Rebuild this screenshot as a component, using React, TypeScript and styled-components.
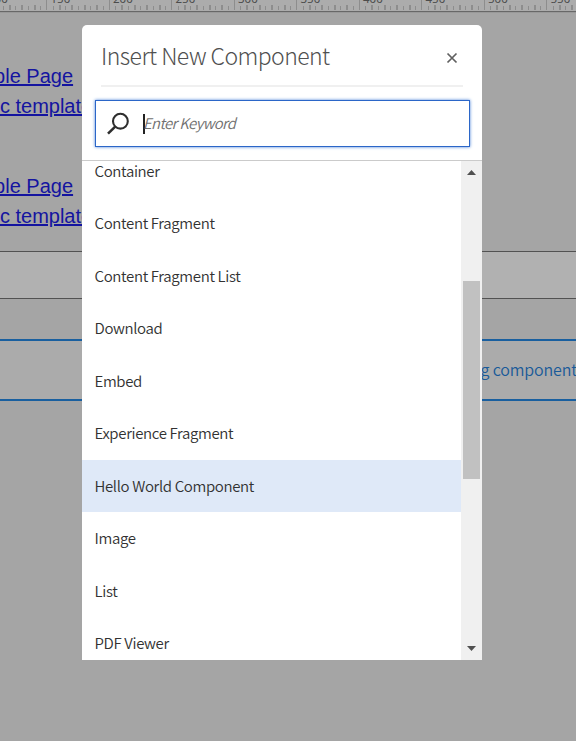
import React from 'react';
import styled, { createGlobalStyle } from 'styled-components';

const ui = '"Noto Sans CJK SC", "Noto Sans", sans-serif';

const Global = createGlobalStyle`
  * { box-sizing: border-box; }
  body { margin: 0; background: #a5a5a5; overflow: hidden; }
`;

const Screen = styled.div`
  position: relative;
  width: 576px;
  height: 741px;
  overflow: hidden;
  background: #a5a5a5;
  font-family: ${ui};
`;

const Ruler = styled.svg`
  display: block;
  width: 576px;
  height: 13px;
`;

const LinkGroup = styled.div<{ $gap: number }>`
  display: flex;
  flex-direction: column;
  padding-top: ${p => p.$gap}px;
`;

const PageLink = styled.a<{ $shift: number }>`
  display: block;
  width: max-content;
  height: 30px;
  line-height: 30px;
  margin-left: ${p => p.$shift}px;
  font-family: "Liberation Sans", Arial, sans-serif;
  font-size: 20px;
  color: #1414a0;
  text-decoration: underline;
  white-space: nowrap;
`;

const Field = styled.div`
  height: 48px;
  margin-top: 20px;
  border: solid #525252;
  border-width: 1px 0;
  background: #b1b1b1;
`;

const DropZone = styled.div`
  height: 62px;
  margin-top: 40px;
  padding-left: 471px;
  border: solid #195f9f;
  border-width: 2px 0;
  background: #ababab;
  color: #195a99;
  font-size: 16px;
  font-weight: 350;
  line-height: 56px;
  letter-spacing: -0.15px;
  white-space: nowrap;
  overflow: hidden;
`;

const Dialog = styled.section`
  position: absolute;
  left: 82px;
  top: 25px;
  width: 400px;
  height: 635px;
  display: flex;
  flex-direction: column;
  background: #fff;
  border-radius: 5px 5px 0 0;
  overflow: hidden;
`;

const Header = styled.header`
  display: flex;
  align-items: center;
  justify-content: space-between;
  height: 62px;
  margin: 0 19px;
  padding-right: 5px;
  border-bottom: 2px solid #f0f0f0;
`;

const Title = styled.h1`
  margin: 0;
  font-size: 23px;
  font-weight: 300;
  line-height: 60px;
  letter-spacing: -0.56px;
  color: #505050;
  white-space: nowrap;
`;

const CloseButton = styled.button`
  display: flex;
  padding: 5px 0 0;
  border: 0;
  background: none;
`;

const SearchBox = styled.label`
  display: flex;
  align-items: center;
  flex: none;
  height: 47px;
  margin: 13px 12px 13px 13px;
  padding-left: 11px;
  border: 1px solid #2b66c8;
  box-shadow: 0 0 3px #4a80d8;
`;

const Caret = styled.span`
  width: 2px;
  height: 20px;
  margin-left: 13px;
  background: #222;
`;

const Placeholder = styled.span`
  margin: -3px 0 0 -2px;
  font-size: 14.8px;
  font-style: italic;
  font-weight: 350;
  letter-spacing: -0.6px;
  color: #707070;
  white-space: nowrap;
`;

const ListArea = styled.div`
  display: flex;
  flex: 1;
  min-height: 0;
  border-top: 1px solid #cbcbcb;
`;

const Items = styled.ul`
  flex: 1;
  margin: -16px 0 0;
  padding: 0;
  list-style: none;
`;

const Viewport = styled.div`
  flex: 1;
  display: flex;
  overflow: hidden;
`;

const Item = styled.li<{ $selected?: boolean }>`
  height: 52.45px;
  padding-left: 12.5px;
  font-size: 15px;
  font-weight: 350;
  line-height: 51px;
  letter-spacing: -0.35px;
  color: #323232;
  background: ${p => (p.$selected ? '#dfe9f8' : 'transparent')};
  white-space: nowrap;
`;

const ScrollTrack = styled.div`
  display: flex;
  flex-direction: column;
  align-items: center;
  justify-content: space-between;
  width: 21px;
  padding: 9px 0;
  background: #f0f0f0;
`;

const Thumb = styled.div`
  width: 17px;
  height: 198px;
  margin-bottom: 61px;
  background: #c1c1c1;
`;

const Arrow = styled.svg`
  display: block;
  width: 9px;
  height: 5px;
`;

const items = [
  { label: 'Container' },
  { label: 'Content Fragment' },
  { label: 'Content Fragment List' },
  { label: 'Download' },
  { label: 'Embed' },
  { label: 'Experience Fragment' },
  { label: 'Hello World Component', selected: true },
  { label: 'Image' },
  { label: 'List' },
  { label: 'PDF Viewer' },
];

const majors = [100, 150, 200, 250, 300, 350, 400, 450, 500, 550];
const ticks = Array.from({ length: 102 }, (_, i) => i);

export default function App() {
  return (
    <Screen>
      <Global />
      <Ruler viewBox="0 0 576 13">
        <rect width="576" height="11" fill="#acacac" />
        {ticks.map(i => {
          const x = Math.round(-16.2 + i * 6.25);
          const major = i % 10 === 0;
          const wide = i % 2 === 0 && !major;
          return <rect key={i} x={x} y={major ? 0 : wide ? 5 : 6} width={wide ? 2 : 1} height={major ? 10 : wide ? 5 : 4} fill="#8d8d8d" />;
        })}
        {majors.map((n, i) => (
          <text key={n} x={-12 + i * 62.5} y="3" fontSize="11.5" fontFamily="Noto Sans" fill="#4c4c4c">{n}</text>
        ))}
        <rect y="11" width="576" height="1" fill="#686868" />
        <rect y="12" width="576" height="1" fill="#999" />
      </Ruler>
      <LinkGroup $gap={48}>
        <PageLink $shift={-47}>Sample Page</PageLink>
        <PageLink $shift={-39}>Basic template</PageLink>
      </LinkGroup>
      <LinkGroup $gap={50}>
        <PageLink $shift={-47}>Sample Page</PageLink>
        <PageLink $shift={-39}>Basic template</PageLink>
      </LinkGroup>
      <Field />
      <DropZone>ng components</DropZone>

      <Dialog>
        <Header>
          <Title>Insert New Component</Title>
          <CloseButton aria-label="Close">
            <svg width="12" height="12" viewBox="0 0 12 12" stroke="#606060" strokeWidth="1.7">
              <path d="M1.5 1.5 10.5 10.5M10.5 1.5 1.5 10.5" />
            </svg>
          </CloseButton>
        </Header>
        <SearchBox>
          <svg width="23" height="23" viewBox="0 0 23 23" fill="none" stroke="#2e2e2e">
            <circle cx="13.4" cy="9.2" r="7.4" strokeWidth="2.1" />
            <path d="M8.2 14.6 1 21.6" strokeWidth="2.6" />
          </svg>
          <Caret />
          <Placeholder>Enter Keyword</Placeholder>
        </SearchBox>
        <ListArea>
          <Viewport>
            <Items>
              {items.map(it => (
                <Item key={it.label} $selected={it.selected}>{it.label}</Item>
              ))}
            </Items>
          </Viewport>
          <ScrollTrack>
            <Arrow viewBox="0 0 9 5"><path d="M0 5 4.5 0 9 5Z" fill="#505050" /></Arrow>
            <Thumb />
            <Arrow viewBox="0 0 9 5"><path d="M0 0 4.5 5 9 0Z" fill="#505050" /></Arrow>
          </ScrollTrack>
        </ListArea>
      </Dialog>
    </Screen>
  );
}
